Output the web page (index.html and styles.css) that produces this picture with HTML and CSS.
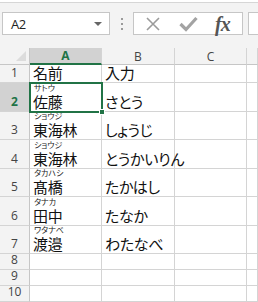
FILE: index.html
```html
<!DOCTYPE html>
<html lang="ja">
<head>
    <meta charset="UTF-8">
    <title>Sheet1</title>
    <link rel="stylesheet" href="styles.css">
</head>
<body>
    <div class="toolbar">
        <div class="name-box">
            <span class="name-text">A2</span>
            <span class="name-arrow"></span>
        </div>
        <div class="grip">
            <span></span><span></span><span></span>
        </div>
        <div class="fx-box">
            <svg class="ico-x" width="16" height="16" viewBox="0 0 16 16">
                <path d="M2 2 L14 14 M14 2 L2 14" stroke="#9b9b9b" stroke-width="1.6" fill="none"/>
            </svg>
            <svg class="ico-ok" width="19" height="16" viewBox="0 0 19 16">
                <path d="M1.5 8 L7 13.5 L17.5 2" stroke="#a3a3a3" stroke-width="3.2" fill="none"/>
            </svg>
            <span class="ico-fx">fx</span>
        </div>
        <div class="formula-input"></div>
    </div>

    <div class="sheet">
        <div class="corner"><span class="tri"></span></div>
        <div class="col-head active">A</div>
        <div class="col-head">B</div>
        <div class="col-head">C</div>
        <div class="col-head"></div>

        <div class="row-head">1</div>
        <div class="cell">名前</div>
        <div class="cell">入力</div>
        <div class="cell"></div>
        <div class="cell"></div>

        <div class="row-head active">2</div>
        <div class="cell selected">
            <div class="kana">サトウ</div>
            <div>佐藤</div>
            <span class="handle"></span>
        </div>
        <div class="cell">さとう</div>
        <div class="cell"></div>
        <div class="cell"></div>

        <div class="row-head">3</div>
        <div class="cell">
            <div class="kana">ショウジ</div>
            <div>東海林</div>
        </div>
        <div class="cell">しょうじ</div>
        <div class="cell"></div>
        <div class="cell"></div>

        <div class="row-head">4</div>
        <div class="cell">
            <div class="kana">ショウジ</div>
            <div>東海林</div>
        </div>
        <div class="cell">とうかいりん</div>
        <div class="cell"></div>
        <div class="cell"></div>

        <div class="row-head">5</div>
        <div class="cell">
            <div class="kana">タカハシ</div>
            <div>髙橋</div>
        </div>
        <div class="cell">たかはし</div>
        <div class="cell"></div>
        <div class="cell"></div>

        <div class="row-head">6</div>
        <div class="cell">
            <div class="kana">タナカ</div>
            <div>田中</div>
        </div>
        <div class="cell">たなか</div>
        <div class="cell"></div>
        <div class="cell"></div>

        <div class="row-head">7</div>
        <div class="cell">
            <div class="kana">ワタナベ</div>
            <div>渡邉</div>
        </div>
        <div class="cell">わたなべ</div>
        <div class="cell"></div>
        <div class="cell"></div>

        <div class="row-head">8</div>
        <div class="cell"></div>
        <div class="cell"></div>
        <div class="cell"></div>
        <div class="cell"></div>

        <div class="row-head">9</div>
        <div class="cell"></div>
        <div class="cell"></div>
        <div class="cell"></div>
        <div class="cell"></div>

        <div class="row-head">10</div>
        <div class="cell"></div>
        <div class="cell"></div>
        <div class="cell"></div>
        <div class="cell"></div>
    </div>
</body>
</html>
```

FILE: styles.css
```css
* {
    box-sizing: border-box;
}
body {
    margin: 0;
    width: 258px;
    height: 302px;
    overflow: hidden;
    background: #ffffff;
    font-family: "Noto Sans CJK JP", "Liberation Sans", sans-serif;
}
.toolbar {
    height: 46px;
    background: #f3f3f3;
    border-top: 1px solid #d6d6d6;
    margin-top: 2px;
    display: flex;
    align-items: flex-start;
    padding-top: 9px;
    padding-left: 2px;
}
.name-box {
    width: 108px;
    height: 23px;
    background: #ffffff;
    border: 1px solid #c6c6c6;
    display: flex;
    align-items: center;
    justify-content: space-between;
    padding: 0 7px 0 8px;
}
.name-text {
    font-family: "Open Sans", "Liberation Sans", sans-serif;
    font-size: 13px;
    color: #222;
    letter-spacing: -0.5px;
}
.name-arrow {
    width: 0;
    height: 0;
    border-left: 4px solid transparent;
    border-right: 4px solid transparent;
    border-top: 4px solid #666;
}
.grip {
    width: 23px;
    height: 23px;
    display: flex;
    flex-direction: column;
    align-items: center;
    justify-content: center;
    gap: 3px;
}
.grip span {
    width: 2px;
    height: 2px;
    background: #9a9a9a;
}
.fx-box {
    width: 110px;
    height: 23px;
    background: #ffffff;
    border: 1px solid #c6c6c6;
    display: flex;
    align-items: center;
    padding-left: 11px;
}
.ico-x {
    margin-right: 18px;
}
.ico-ok {
    margin-right: 17px;
}
.ico-fx {
    font-family: "Liberation Serif", serif;
    font-style: italic;
    font-weight: bold;
    font-size: 20px;
    color: #555;
    letter-spacing: -1px;
    line-height: 1;
    margin-top: 1px;
}
.formula-input {
    margin-left: 5px;
    flex: 1;
    height: 23px;
    background: #ffffff;
    border: 1px solid #c6c6c6;
    border-right: none;
}
.sheet {
    display: grid;
    grid-template-columns: 30px 72px 73px 72px 1fr;
    grid-template-rows: 17px 18px 29px 28px 29px 28px 29px 28px 16px 16px 16px;
}
.corner {
    position: relative;
    background: #f3f3f3;
    border-right: 1px solid #c6c6c6;
    border-bottom: 1px solid #c6c6c6;
}
.tri {
    position: absolute;
    right: 3px;
    bottom: 3px;
    width: 0;
    height: 0;
    border-left: 10px solid transparent;
    border-bottom: 10px solid #dcdcdc;
}
.col-head {
    background: #f3f3f3;
    border-right: 1px solid #d4d4d4;
    border-bottom: 1px solid #c6c6c6;
    font-family: "Open Sans", "Liberation Sans", sans-serif;
    font-size: 12px;
    color: #444;
    display: flex;
    align-items: center;
    justify-content: center;
}
.col-head.active {
    background: #d2d2d2;
    color: #217346;
    font-weight: bold;
    border-bottom: 2px solid #217346;
}
.row-head {
    background: #f3f3f3;
    border-right: 1px solid #c6c6c6;
    border-bottom: 1px solid #d4d4d4;
    font-family: "Open Sans", "Liberation Sans", sans-serif;
    font-size: 12px;
    color: #444;
    display: flex;
    align-items: flex-end;
    justify-content: center;
    padding-bottom: 1px;
}
.row-head.active {
    background: #d2d2d2;
    color: #217346;
    font-weight: bold;
}
.cell {
    position: relative;
    border-right: 1px solid #d4d4d4;
    border-bottom: 1px solid #d4d4d4;
    font-size: 15px;
    line-height: 15px;
    color: #111;
    font-feature-settings: "palt";
    letter-spacing: -0.3px;
    display: flex;
    flex-direction: column;
    justify-content: flex-end;
    padding: 0 0 2px 3px;
    white-space: nowrap;
}
.kana {
    font-size: 8px;
    line-height: 8px;
    letter-spacing: 0;
    color: #222;
    margin-bottom: 2px;
    padding-left: 1px;
}
.cell.selected {
    outline: 2px solid #217346;
    outline-offset: -1px;
    z-index: 1;
}
.handle {
    position: absolute;
    right: -4px;
    bottom: -4px;
    width: 6px;
    height: 6px;
    background: #217346;
    border: 1px solid #ffffff;
}
```
